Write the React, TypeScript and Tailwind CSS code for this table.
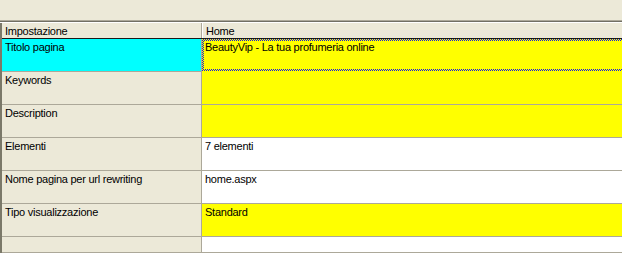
const rows = [
  { label: "Titolo pagina", value: "BeautyVip - La tua profumeria online", bg: "bg-[#ffff00]", focus: true },
  { label: "Keywords", value: "", bg: "bg-[#ffff00]" },
  { label: "Description", value: "", bg: "bg-[#ffff00]" },
  { label: "Elementi", value: "7 elementi", bg: "bg-white" },
  { label: "Nome pagina per url rewriting", value: "home.aspx", bg: "bg-white" },
  { label: "Tipo visualizzazione", value: "Standard", bg: "bg-[#ffff00]" },
];

function FocusRect() {
  const checker =
    "absolute bg-[repeating-conic-gradient(#1e22d8_0_25%,#ffff00_0_50%)] bg-[length:2px_2px]";
  return (
    <div className="pointer-events-none absolute inset-0">
      <div className={`${checker} left-0 right-0 top-0 h-[2px]`} />
      <div className={`${checker} left-0 right-0 bottom-0 h-[2px]`} />
      <div className={`${checker} left-0 top-0 bottom-0 w-[2px]`} />
    </div>
  );
}

export default function App() {
  return (
    <div className="w-[622px] h-[253px] overflow-hidden bg-[#ece9d8] font-['Liberation_Sans',Arial,sans-serif] text-[11px] leading-[13px] tracking-[-0.25px] text-black">
      <div className="h-[20px]" />
      <div className="h-px bg-[#aca899]" />
      <div className="h-px bg-[#716f64]" />
      <div className="h-px bg-white" />

      <div className="border-l-2 border-[#7b7969] w-[900px]">
        {/* header */}
        <div className="flex h-[16px] border-b border-[#1a1a1a]">
          <div className="w-[200px] border-r border-[#aca899] pl-[3px] pt-[2px]">Impostazione</div>
          <div className="flex-1 border-l border-white pl-[3px] pt-[2px]">Home</div>
        </div>

        {rows.map((r) => (
          <div key={r.label} className="flex h-[33px]">
            <div
              className={`w-[200px] border-r border-b border-[#aca899] pl-[3px] pt-[2px] ${
                r.focus ? "bg-[#00ffff]" : "bg-[#ece9d8]"
              }`}
            >
              {r.label}
            </div>
            <div
              className={`relative flex-1 border-b pl-[3px] pt-[2px] ${r.bg} ${
                r.focus ? "border-[#ffff00]" : "border-[#aca899]"
              }`}
            >
              {r.value}
              {r.focus && <FocusRect />}
            </div>
          </div>
        ))}

        <div className="flex h-[16px]">
          <div className="w-[200px] border-r border-b border-[#aca899] bg-[#ece9d8]" />
          <div className="flex-1 border-b border-[#aca899] bg-white" />
        </div>
      </div>
    </div>
  );
}
